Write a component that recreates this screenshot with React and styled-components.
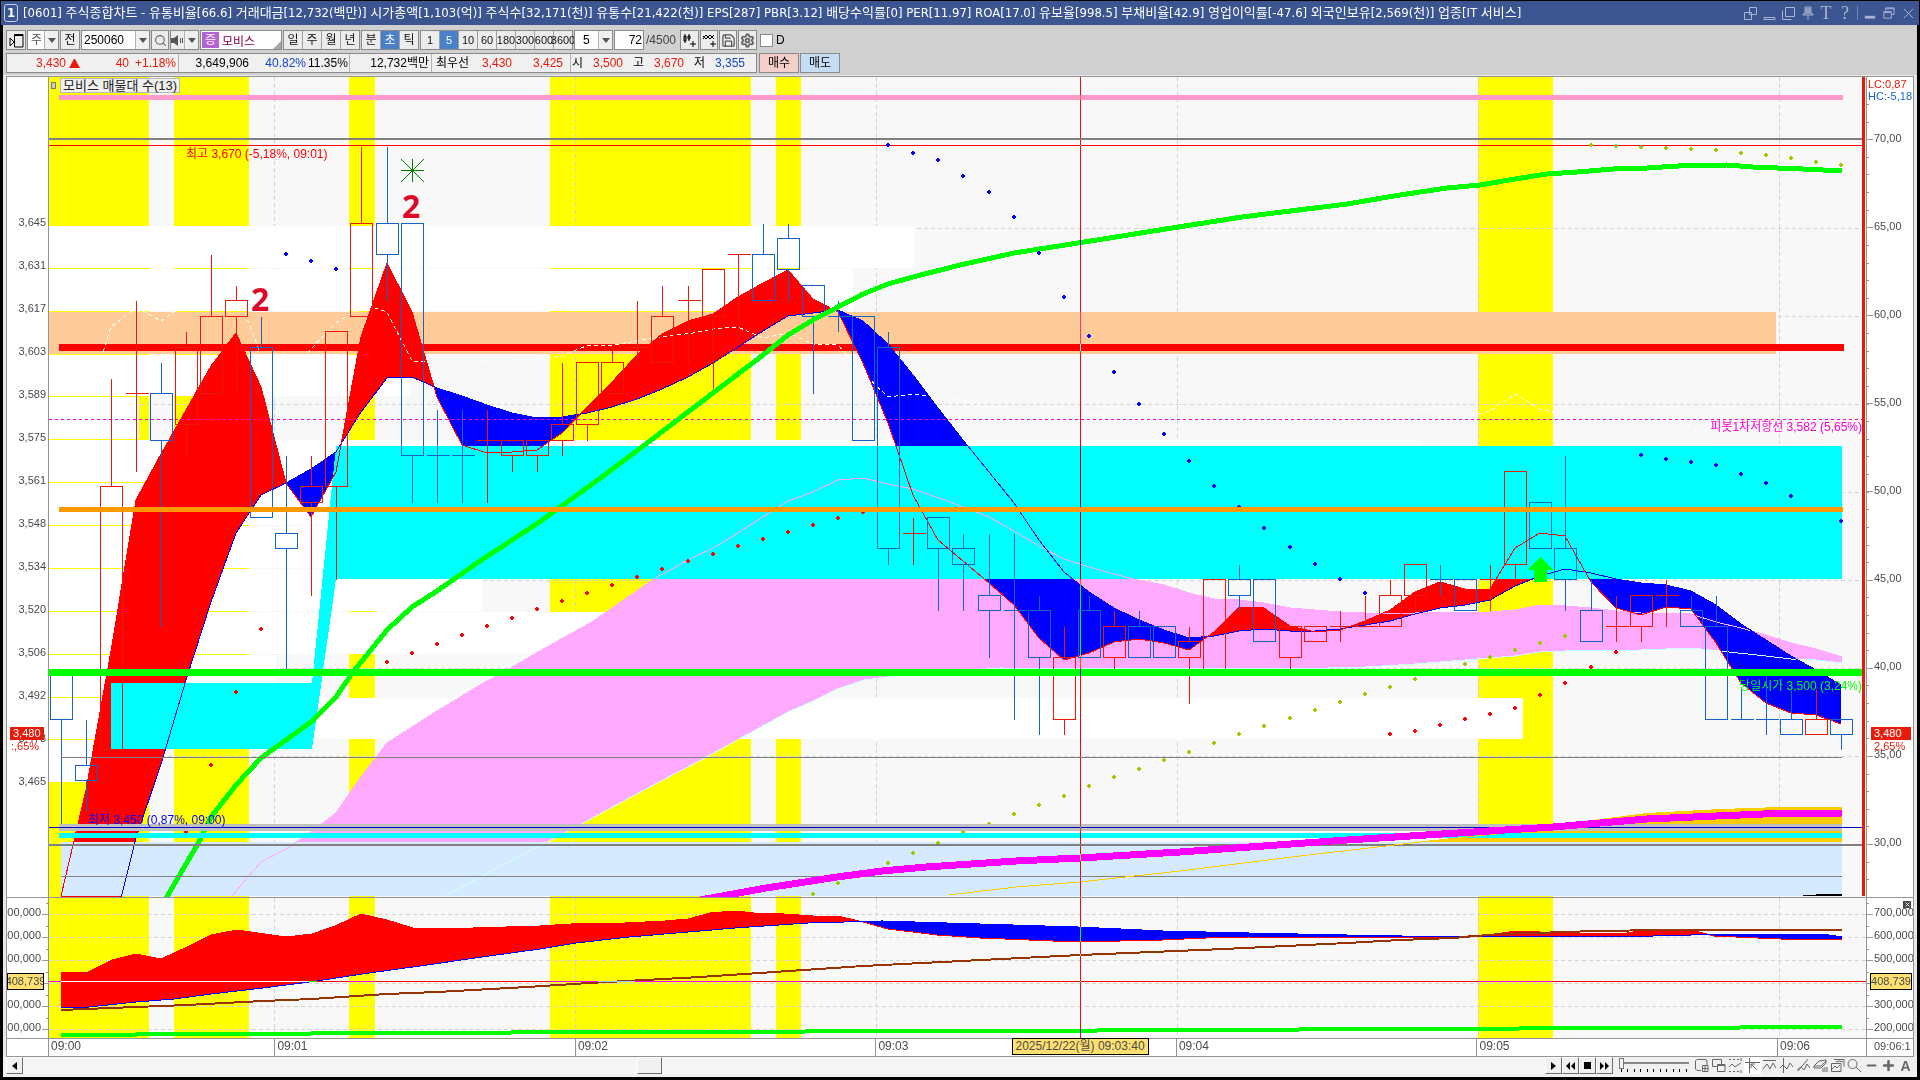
import { useState } from 'react';
import styled, { createGlobalStyle, css } from 'styled-components';
import { Search, Save, Settings, Minus, Plus, X } from 'lucide-react';

const GlobalStyle = createGlobalStyle`
  * {
    box-sizing: border-box;
  }
  body {
    margin: 0;
    background: #000;
    font: 12px/14px "Liberation Sans", "Noto Sans CJK KR", sans-serif;
    color: #000;
  }
  button,
  input,
  select {
    font: inherit;
    color: inherit;
    margin: 0;
    padding: 0;
    border: 0;
    border-radius: 0;
    background: none;
  }
`;

/* ---------- data ---------- */

const RED = '#e81a0a';
const BLUE = '#1464c8';

const LEFT = 49;
const RIGHT = 1866;
const TOP = 77;
const SPLIT = 897;
const BOTTOM = 1038;

const xAt = (i) => Math.floor(61 + i * 25.082);
const yAt = (price) => Math.round(223 + (3645 - price) * 3.097);

// [colour, body top, body bottom, high, low]
const candles = [
  ['b', 3500, 3485, 3500, 3450], ['b', 3470, 3465, 3485, 3455], ['r', 3560, 3475, 3595, 3475],
  ['r', 3590, 3590, 3620, 3565], ['b', 3590, 3575, 3600, 3515], ['r', 3605, 3580, 3610, 3570],
  ['r', 3615, 3590, 3635, 3590], ['r', 3620, 3615, 3625, 3590], ['b', 3605, 3550, 3615, 3550],
  ['b', 3545, 3540, 3570, 3500], ['r', 3560, 3555, 3570, 3525], ['r', 3610, 3560, 3610, 3530],
  ['r', 3645, 3615, 3670, 3615], ['b', 3645, 3635, 3670, 3620], ['b', 3645, 3570, 3645, 3555],
  ['b', 3570, 3570, 3585, 3555], ['b', 3570, 3570, 3585, 3555], ['r', 3575, 3575, 3585, 3555],
  ['r', 3575, 3570, 3575, 3565], ['r', 3575, 3570, 3575, 3565], ['r', 3580, 3575, 3600, 3570],
  ['r', 3600, 3580, 3600, 3575], ['r', 3600, 3590, 3605, 3590], ['r', 3605, 3605, 3620, 3600],
  ['r', 3615, 3600, 3625, 3600], ['r', 3620, 3620, 3625, 3600], ['r', 3630, 3615, 3630, 3590],
  ['r', 3635, 3635, 3635, 3610], ['b', 3635, 3620, 3645, 3620], ['b', 3640, 3630, 3645, 3620],
  ['b', 3625, 3615, 3625, 3590], ['b', 3615, 3615, 3620, 3610], ['b', 3615, 3575, 3615, 3575],
  ['b', 3605, 3540, 3610, 3535], ['r', 3545, 3545, 3550, 3535], ['b', 3550, 3540, 3550, 3520],
  ['b', 3540, 3535, 3545, 3520], ['b', 3525, 3520, 3545, 3505], ['b', 3520, 3520, 3545, 3485],
  ['b', 3520, 3505, 3525, 3480], ['r', 3505, 3485, 3515, 3480], ['b', 3520, 3505, 3525, 3505],
  ['r', 3515, 3505, 3520, 3500], ['b', 3515, 3505, 3520, 3505], ['b', 3515, 3505, 3515, 3505],
  ['r', 3510, 3505, 3515, 3490], ['r', 3530, 3500, 3530, 3500], ['b', 3530, 3525, 3535, 3520],
  ['b', 3530, 3510, 3530, 3510], ['r', 3515, 3505, 3515, 3500], ['r', 3515, 3510, 3515, 3510],
  ['r', 3515, 3515, 3520, 3510], ['r', 3515, 3515, 3525, 3515], ['r', 3525, 3515, 3530, 3515],
  ['r', 3535, 3525, 3535, 3520], ['b', 3530, 3530, 3535, 3525], ['b', 3530, 3520, 3530, 3520],
  ['r', 3530, 3530, 3535, 3520], ['r', 3565, 3535, 3565, 3530], ['b', 3555, 3540, 3555, 3540],
  ['b', 3540, 3530, 3570, 3520], ['b', 3520, 3510, 3530, 3510], ['r', 3515, 3515, 3525, 3510],
  ['r', 3525, 3515, 3525, 3510], ['r', 3525, 3525, 3530, 3515], ['b', 3520, 3515, 3525, 3515],
  ['b', 3515, 3485, 3525, 3485], ['b', 3485, 3485, 3495, 3485], ['b', 3485, 3485, 3500, 3480],
  ['b', 3485, 3480, 3495, 3480], ['r', 3485, 3480, 3495, 3480], ['b', 3485, 3480, 3485, 3475],
];

const fastMa = [
  896, 790, 651, 500, 454, 410, 366, 333, 387, 483, 517, 472, 337, 263, 312, 397, 445, 453,
  452, 450, 433, 407, 382, 355, 334, 321, 314, 297, 283, 270, 299, 312, 363, 423, 495, 540,
  561, 583, 605, 638, 660, 653, 642, 639, 643, 650, 632, 607, 608, 626, 632, 630, 621, 610,
  592, 582, 589, 589, 548, 533, 536, 582, 608, 615, 607, 609, 643, 683, 703, 713, 715, 724,
];

const slowMa = [
  1140, 1040, 938, 838, 764, 680, 602, 533, 495, 483, 469, 452, 412, 378, 377, 388, 396, 405,
  413, 418, 417, 413, 407, 399, 389, 377, 363, 347, 331, 316, 313, 310, 321, 344, 375, 408,
  440, 472, 503, 540, 572, 592, 608, 620, 630, 638, 636, 631, 629, 631, 631, 629, 625, 621,
  614, 608, 605, 600, 586, 576, 569, 573, 579, 583, 585, 591, 605, 624, 640, 656, 670, 685,
];

const cloudTop = [
  [232, 896], [247, 878], [261, 862], [286, 849], [311, 832], [336, 813], [361, 777], [387, 743],
  [412, 727], [437, 711], [462, 696], [480, 685], [509, 669], [547, 647], [592, 622], [654, 579],
  [688, 560], [717, 546], [755, 522], [788, 501], [813, 492], [838, 480], [863, 478], [888, 484],
  [913, 489], [942, 499], [963, 507], [989, 517], [1014, 531], [1039, 546], [1064, 559],
  [1089, 567], [1114, 574], [1133, 579], [1164, 585], [1189, 593], [1214, 599], [1239, 600],
  [1264, 603], [1290, 608], [1340, 612], [1390, 614], [1440, 612], [1490, 612], [1515, 610],
  [1540, 605], [1565, 606], [1591, 608], [1616, 611], [1641, 613], [1691, 614], [1716, 622],
  [1741, 628], [1766, 635], [1791, 643], [1816, 649], [1842, 657],
];

const cloudBottom = [
  [445, 896], [480, 877], [547, 842], [583, 823], [659, 782], [703, 759], [739, 739], [788, 712],
  [813, 701], [837, 689], [864, 680], [895, 676], [960, 671], [1000, 668], [1200, 669],
  [1328, 668], [1365, 667], [1415, 664], [1440, 662], [1490, 658], [1515, 656], [1540, 652],
  [1590, 650], [1641, 650], [1691, 648], [1720, 651], [1766, 656], [1791, 659], [1816, 660],
  [1842, 663],
];

const greenMa = [
  [165, 900], [200, 840], [211, 817], [236, 785], [261, 758], [286, 740], [311, 722], [336, 697],
  [353, 672], [387, 630], [412, 607], [437, 591], [480, 561], [538, 523], [570, 500], [595, 482],
  [642, 447], [680, 418], [713, 393], [763, 355], [788, 335], [813, 320], [838, 307], [863, 294],
  [888, 284], [913, 277], [960, 265], [1014, 253], [1078, 243], [1172, 228], [1242, 217],
  [1347, 204], [1400, 195], [1447, 188], [1480, 185], [1515, 179], [1547, 174], [1577, 172],
  [1613, 169], [1647, 168], [1678, 166], [1727, 165], [1753, 167], [1803, 169], [1842, 171],
];

const magentaMa = [
  [700, 900], [766, 888], [792, 884], [837, 877], [882, 871], [926, 867], [971, 864], [1016, 861],
  [1080, 858], [1180, 852], [1347, 840], [1553, 827], [1647, 819], [1763, 814], [1842, 813],
];

const goldTop = [
  [1553, 828], [1600, 819], [1647, 813], [1720, 809], [1780, 807], [1842, 807],
];

const goldLine = [
  [949, 895], [1016, 887], [1080, 882], [1180, 871], [1300, 856], [1420, 842], [1553, 828],
];

const whiteDashes = [
  [[103, 352], [111, 327], [130, 312], [143, 311], [161, 321], [177, 310]],
  [[245, 313], [260, 352]],
  [
    [307, 353], [336, 323], [353, 312], [375, 308], [387, 312], [412, 361], [480, 361], [540, 359],
    [562, 356], [586, 346], [613, 345], [660, 337], [693, 333], [713, 329], [738, 327], [763, 338],
    [788, 333], [813, 344], [838, 345], [863, 373], [888, 397], [913, 394], [963, 400], [989, 410],
    [1017, 411], [1031, 417], [1117, 415], [1139, 421], [1189, 418], [1214, 407], [1239, 412],
    [1256, 418], [1371, 418], [1390, 411], [1415, 408], [1440, 410], [1465, 417], [1490, 411],
    [1515, 394], [1540, 409], [1565, 415], [1591, 428], [1616, 425], [1640, 420], [1673, 420],
    [1691, 427], [1716, 444], [1820, 445],
  ],
];

// parabolic dots: [colour, first candle index, y values]
const dots = [
  ['#00f', 9, [254, 261, 269]],
  ['#00f', 33, [145, 153, 160, 176, 192, 217, 253, 297, 336, 372, 404, 434, 461, 486, 507, 528, 547, 564, 579, 593]],
  ['#00f', 63, [455, 459, 462, 465, 474, 483, 496]],
  ['#00f', 71, [521]],
  ['#f00', 5, [832, 765, 692, 629]],
  ['#f00', 13, [662, 653, 644, 635, 626, 618, 609, 601, 593, 585, 577, 569, 561, 554, 546, 539, 532, 525, 518, 512]],
  ['#f00', 53, [734, 731, 725, 719, 714, 708, 695, 683, 667, 652]],
  ['#9c0', 30, [894, 883, 873, 863, 853, 843, 832, 824, 814, 805, 796, 786, 777, 769, 760, 752, 743, 734, 726, 718, 710, 702, 694, 687, 679, 671, 664, 657, 650, 643, 636]],
  ['#9c0', 61, [145, 146, 147, 148, 149, 150, 153, 155, 158, 162, 165]],
];

const signalBands = [[49, 149], [174, 249], [349, 375], [550, 751], [776, 801], [1478, 1553]];

// volume by price: [top, bottom, right edge, colour]
const volumeBands = [
  [226, 268, 914], [269, 311, 853], [312, 354, 1776, '#fc9'], [355, 396, 410], [397, 439, 139],
  [440, 482, 1423], [483, 525, 900], [526, 568, 900], [569, 611, 483], [612, 654, 900],
  [655, 697, 276], [698, 739, 1523], [740, 782, 95],
];

const minuteLines = [274, 575, 876, 1177, 1478, 1779];

const subFast = [
  [61, 972], [86, 973], [112, 960], [136, 954], [161, 959], [187, 947], [211, 935], [237, 930],
  [286, 937], [312, 934], [335, 926], [361, 914], [387, 920], [413, 928], [473, 928], [540, 926],
  [571, 924], [625, 923], [665, 921], [688, 919], [710, 913], [735, 911], [754, 913], [784, 914],
  [813, 916], [838, 916], [863, 922], [888, 929], [937, 935], [980, 938], [1078, 942], [1163, 940],
  [1206, 938], [1249, 937], [1347, 937], [1447, 937], [1490, 935], [1515, 931], [1540, 932],
  [1620, 934], [1640, 931], [1667, 930], [1692, 930], [1714, 936], [1780, 939], [1842, 940],
];

const subSlow = [
  [61, 1008], [89, 1007], [136, 1002], [174, 999], [211, 994], [263, 988], [317, 981], [362, 974],
  [420, 966], [482, 957], [540, 949], [576, 943], [629, 937], [700, 931], [735, 928], [808, 923],
  [882, 921], [980, 924], [1078, 927], [1163, 931], [1249, 933], [1347, 935], [1457, 937],
  [1653, 936], [1730, 934], [1823, 934], [1842, 937],
];

const subBrown = [
  [61, 1010], [136, 1007], [187, 1005], [263, 1001], [312, 999], [387, 994], [437, 992],
  [527, 987], [589, 983], [700, 977], [863, 966], [1080, 955], [1224, 949], [1347, 943],
  [1400, 940], [1453, 938], [1500, 934], [1567, 932], [1593, 931], [1667, 930], [1842, 930],
];

const subGreen = [
  [61, 1035], [212, 1034], [413, 1033], [612, 1032], [1000, 1031], [1400, 1029], [1642, 1028],
  [1842, 1027],
];

const priceLabels = [
  '3,645', '3,631', '3,617', '3,603', '3,589', '3,575', '3,561',
  '3,548', '3,534', '3,520', '3,506', '3,492', '3,478', '3,465',
];
const percentLabels = ['70,00', '65,00', '60,00', '55,00', '50,00', '45,00', '40,00', '35,00', '30,00'];
const volumeLabels = ['700,000', '600,000', '500,000', null, '300,000', '200,000'];

/* ---------- geometry helpers ---------- */

const toPoints = (list) => list.map((p) => p.join(',')).join(' ');

const valueAt = (list, x) => {
  const k = list.findIndex((p) => p[0] >= x);
  if (k <= 0) return list[Math.max(k, 0)][1];
  const [x0, y0] = list[k - 1];
  const [x1, y1] = list[k];
  return y0 + ((y1 - y0) * (x - x0)) / (x1 - x0);
};

// splits the area between two lines into the parts where a is above or below b
const splitArea = (a, b) => {
  const xs = [...new Set([...a, ...b].map((p) => p[0]))].sort((m, n) => m - n);
  const up = [];
  const down = [];
  for (let k = 1; k < xs.length; k += 1) {
    const [x0, x1] = [xs[k - 1], xs[k]];
    const [a0, a1, b0, b1] = [valueAt(a, x0), valueAt(a, x1), valueAt(b, x0), valueAt(b, x1)];
    const d0 = b0 - a0;
    const d1 = b1 - a1;
    if (d0 * d1 >= 0) {
      (d0 + d1 > 0 ? up : down).push(`M${x0} ${a0}L${x1} ${a1}L${x1} ${b1}L${x0} ${b0}Z`);
    } else {
      const t = d0 / (d0 - d1);
      const xc = x0 + (x1 - x0) * t;
      const yc = a0 + (a1 - a0) * t;
      (d0 > 0 ? up : down).push(`M${x0} ${a0}L${xc} ${yc}L${x0} ${b0}Z`);
      (d1 > 0 ? up : down).push(`M${xc} ${yc}L${x1} ${a1}L${x1} ${b1}Z`);
    }
  }
  return { up: up.join(''), down: down.join('') };
};

const fastPoints = fastMa.map((y, i) => [xAt(i), y]);
const slowPoints = slowMa.map((y, i) => [xAt(i), y]);
const maArea = splitArea(fastPoints, slowPoints);
const subArea = splitArea(subFast, subSlow);

/* ---------- window ---------- */

const Window = styled.div`
  display: flex;
  flex-direction: column;
  height: 100vh;
  padding: 1px 1px 3px;
`;

const TitleBar = styled.header`
  display: flex;
  align-items: center;
  justify-content: space-between;
  height: 24px;
  padding: 0 4px 0 3px;
  background: #3a5590;
  color: #fff;
`;

const Title = styled.h1`
  display: flex;
  align-items: center;
  gap: 5px;
  margin: 0;
  font: 13px/18px "DejaVu Sans Condensed", "Noto Sans CJK KR", sans-serif;
  white-space: pre;
`;

const TitleBadge = styled.span`
  width: 14px;
  height: 18px;
  border: 1px solid #c8d2ea;
  border-radius: 3px;
  font-weight: bold;
  line-height: 16px;
  text-align: center;
`;

const TitleButtons = styled.div`
  display: flex;
  align-items: center;
  gap: 5px;
  color: #a9b5d3;
`;

const TitleButton = styled.button`
  width: 14px;
  height: 18px;
  font-family: "Liberation Serif", serif;
  font-size: 18px;
  line-height: 18px;
  svg {
    display: block;
    margin: 2px auto;
  }
`;

const TitleDivider = styled.span`
  width: 1px;
  height: 14px;
  background: #7385b0;
`;

const Body = styled.main`
  display: flex;
  flex: 1;
  flex-direction: column;
  min-height: 0;
  margin: 0 2px;
  background: #e8e8e8;
`;

/* ---------- toolbar ---------- */

const Toolbars = styled.div`
  display: flex;
  flex: none;
  flex-direction: column;
  gap: 3px;
  height: 50px;
  padding: 5px 3px 2px;
  background: #d0d0d0;
`;

const Row = styled.div`
  display: flex;
  height: 20px;
  gap: 1px;
`;

const box = css`
  display: flex;
  align-items: center;
  height: 20px;
  border: 1px solid #8a8a8a;
  background: #f0f0f0;
`;

const ToolButton = styled.button`
  ${box};
  justify-content: center;
  width: ${(p) => p.$w || 20}px;
  background: ${(p) => p.$bg || '#ececec'};
`;

const Field = styled.div`
  ${box};
  width: ${(p) => p.$w}px;
  background: #fdfdfd;
`;

const fieldText = css`
  flex: 1;
  min-width: 0;
  height: 18px;
  padding: 0 ${(p) => p.$pad || 2}px;
  appearance: none;
  outline: none;
  color: ${(p) => p.$color || '#000'};
  text-align: ${(p) => p.$align || 'left'};
`;

const TextInput = styled.input`
  ${fieldText};
`;

const Select = styled.select`
  ${fieldText};
`;

const ArrowCell = styled.button`
  display: flex;
  align-items: center;
  justify-content: center;
  width: 14px;
  height: 18px;
  border-left: 1px solid #b4b4b4;
  background: #f0f0f0;
`;

const SoundButton = styled.button`
  display: flex;
  flex: 1;
  align-items: center;
  justify-content: center;
  height: 18px;
  background: #ececec;
`;

const MarketTag = styled.span`
  width: 17px;
  height: 16px;
  margin-left: 1px;
  background: #b463d2;
  color: #fff;
  line-height: 16px;
  text-align: center;
`;

const Corner = styled.span`
  align-self: flex-end;
  border: 4px solid;
  border-color: transparent #a8a8a8 #a8a8a8 transparent;
`;

const Segments = styled.div`
  ${box};
  width: ${(p) => p.$w}px;
  font-size: ${(p) => p.$font || 12}px;
`;

const Segment = styled.button`
  display: flex;
  flex: 1;
  align-items: center;
  justify-content: center;
  min-width: 0;
  height: 18px;
  border-left: 1px solid #a0a0a0;
  background: ${(p) => (p.$on ? '#4a80c8' : '#ececec')};
  color: ${(p) => (p.$on ? '#fff' : '#111')};
  white-space: nowrap;
  &:first-child {
    border-left: 0;
  }
`;

const Total = styled.span`
  width: 34px;
  padding-left: 1px;
  color: #444;
  line-height: 20px;
`;

const CheckLabel = styled.label`
  display: flex;
  align-items: center;
  gap: 3px;
  padding-left: 2px;
  input {
    appearance: none;
    width: 13px;
    height: 13px;
    border: 1px solid #8a8a8a;
    background: #fff;
  }
`;

const Quote = styled.div`
  ${box};
  width: 751px;
  margin-right: 1px;
  background: #f0f0f0;
`;

const QuoteCell = styled.span`
  width: ${(p) => p.$w}px;
  height: 18px;
  padding-right: ${(p) => p.$pad || 2}px;
  border-right: ${(p) => (p.$end ? '1px solid #b4b4b4' : '0')};
  color: ${(p) => p.$color || '#000'};
  line-height: 18px;
  text-align: right;
  white-space: nowrap;
`;

const UpMark = styled.svg`
  margin-left: 3px;
  vertical-align: -1px;
`;

/* ---------- chart ---------- */

const ChartFrame = styled.section`
  display: grid;
  flex: 1;
  grid-template-columns: 42px minmax(0, 1fr) 47px;
  grid-template-rows: minmax(0, 820fr) minmax(0, 142fr) 17px;
  min-height: 0;
  margin: 1px 3px 0;
  border: 1px solid #949494;
  background: #fff;
`;

const Plot = styled.div`
  position: relative;
  min-height: 0;
  overflow: hidden;
  border-bottom: ${(p) => (p.$last ? '1px solid #949494' : '0')};
  border-top: ${(p) => (p.$last ? '1px solid #949494' : '0')};
  background: #f8f8f8;
`;

const Canvas = styled.svg`
  display: block;
  width: 100%;
  height: 100%;
`;

const Crosshair = styled.line`
  stroke: #0ff;
  mix-blend-mode: difference;
`;

const PlotCaption = styled.div`
  position: absolute;
  top: 1px;
  left: 2px;
  display: flex;
  align-items: center;
  gap: 4px;
  color: #222;
  font-size: 13px;
  i {
    width: 5px;
    height: 7px;
    border: 1px solid #777;
    background: #ccc;
  }
  span {
    height: 15px;
    padding: 0 2px;
    border: 1px solid #b8b8b8;
    background: #f0f0f0;
    line-height: 13px;
  }
`;

const Axis = styled.div`
  position: relative;
  display: flex;
  justify-content: ${(p) => (p.$left ? 'flex-end' : 'flex-start')};
  min-height: 0;
  overflow: hidden;
  border-${(p) => (p.$left ? 'right' : 'left')}: 1px solid #949494;
  border-bottom: ${(p) => (p.$last ? '1px solid #949494' : '0')};
  border-top: ${(p) => (p.$last ? '1px solid #949494' : '0')};
  color: #4a4a4a;
  font-size: 11px;
`;

const AxisLabels = styled.div`
  display: flex;
  flex-direction: column;
  align-items: ${(p) => (p.$left ? 'flex-end' : 'flex-start')};
  padding-top: ${(p) => p.$top}px;
  padding-right: ${(p) => p.$right || 0}px;
`;

const AxisLabel = styled.span`
  flex: none;
  height: ${(p) => p.$h}px;
  line-height: ${(p) => p.$h}px;
`;

const Ticks = styled.svg`
  flex: none;
  width: 7px;
  height: 100%;
`;

const PriceTag = styled.div`
  position: absolute;
  top: 650px;
  left: ${(p) => (p.$left ? 3 : 4)}px;
  width: ${(p) => (p.$left ? 34 : 40)}px;
  padding-left: 3px;
  background: ${RED};
  color: #fff;
  line-height: 13px;
`;

const PriceChange = styled.div`
  position: absolute;
  top: 663px;
  left: ${(p) => (p.$left ? 4 : 7)}px;
  color: ${RED};
  line-height: 12px;
`;

const HighLow = styled.div`
  position: absolute;
  top: 1px;
  left: 1px;
  color: ${(p) => p.$color};
  line-height: 12px;
  white-space: nowrap;
`;

const CursorTag = styled.div`
  position: relative;
  display: flex;
  flex: none;
  justify-content: center;
  width: ${(p) => p.$w}px;
  height: 17px;
  margin: 3px ${(p) => (p.$left ? -3 : 0)}px 3px ${(p) => (p.$left ? 0 : -4)}px;
  overflow: hidden;
  border: 1px solid #000;
  background: #ffe070;
  line-height: 15px;
`;

const CloseMark = styled.button`
  position: absolute;
  top: 3px;
  right: 2px;
  width: 8px;
  height: 7px;
  background: #444;
  color: #fff;
  svg {
    display: block;
    margin: 0 auto;
  }
`;

const TimeAxis = styled.div`
  position: relative;
  display: flex;
  margin-left: -1px;
  color: #4a4a4a;
`;

const TimeCell = styled.span`
  flex: ${(p) => p.$grow};
  min-width: 0;
  padding-left: 2px;
  border-left: 1px solid #949494;
`;

const TimeTag = styled.div`
  position: absolute;
  top: -1px;
  left: 53%;
  width: 137px;
  height: 17px;
  border: 1px solid #000;
  background: #ffe070;
  line-height: 15px;
  text-align: center;
`;

const TimeEnd = styled.div`
  padding-left: 7px;
  border-left: 1px solid #949494;
  color: #4a4a4a;
  font-size: 11px;
`;

/* ---------- bottom bar ---------- */

const BottomBar = styled.footer`
  display: flex;
  flex: none;
  height: 20px;
  padding: 0 3px 3px;
  background: #f0f0f0;
`;

const RaisedButton = styled.button`
  display: flex;
  align-items: center;
  justify-content: center;
  width: 17px;
  height: 17px;
  border: 1px solid;
  border-color: #fff #6e6e6e #6e6e6e #fff;
  background: #f0f0f0;
`;

const ScrollTrack = styled.div`
  display: grid;
  flex: 1;
  grid-template-columns: 614fr 25px 884fr;
  height: 17px;
  background: #f6f6f6;
`;

const ScrollThumb = styled.div`
  grid-column: 2;
  border: 1px solid;
  border-color: #fff #6e6e6e #6e6e6e #fff;
  background: #f0f0f0;
`;

const SpeedBox = styled.div`
  display: flex;
  flex-direction: column;
  width: 70px;
  margin: 0 4px 0 6px;
`;

const Speed = styled.input`
  appearance: none;
  width: 70px;
  height: 12px;
  background: linear-gradient(#888, #888) 0 5px / 100% 2px no-repeat;
  &::-webkit-slider-thumb {
    appearance: none;
    width: 5px;
    height: 11px;
    border: 1px solid #777;
    background: #f4f4f4;
  }
`;

const BarIcon = styled.button`
  display: flex;
  align-items: center;
  justify-content: center;
  width: 17px;
  height: 17px;
  background: ${(p) => (p.$on ? '#fff' : 'none')};
  color: #666;
  font-size: 14px;
`;

/* ---------- small drawings ---------- */

const Down = () => (
  <svg width="8" height="5" viewBox="0 0 8 5">
    <path d="M0 0H8L4 5Z" fill="#555" />
  </svg>
);

const Glyph = ({ d, size = 15, fill = 'none', width = 1 }) => (
  <svg width={size} height={size} viewBox="0 0 15 15" fill={fill} stroke="currentColor" strokeWidth={width}>
    <path d={d} />
  </svg>
);

const titleIcons = [
  ['창 분리', 'M1.5 6.5H8.5V13.5H1.5Z M6.5 1.5H13.5V8.5H6.5Z'],
  ['접기', 'M2 11.5H13V13.5H2Z'],
  ['복사', 'M1.5 4.5V13.5H10.5 M4.5 1.5H13.5V10.5H4.5Z'],
  ['고정', 'M5 1H11V8H13V9H3V8H5Z M8 9V14 M7 2V8 M9 2V8 M6 2V8 M10 2V8 M8 2V8'],
];

const barIcons = [
  ['차트 추가', 'M13 7V3L12 1.5H3L1.5 3V11L3 12.5H7 M8.5 7.5H14V13.5H8.5Z M11 7.5V13.5 M8.5 10.5H14'],
  ['차트 겹침', 'M1.5 1.5H10.5V7 M1.5 1.5V8.5H6 M6.5 6.5H14V13.5H6.5Z M6.5 7.5H14'],
  ['구간', 'M1 1.5H3M5 1.5H7M9 1.5H11M13 0V3 M1 13.5H3M5 13.5H7M9 13.5H11M13 12V15 M1 9L4 6L7 9L13 5'],
  ['십자선', 'M0 4.5H15 M4.5 0V15 M6 6L12 12 M6 10V6H10'],
  ['수평선', 'M1 2.5H14 M1 11L5 6L8 11L11 5L14 10'],
  ['수직선', 'M4.5 0V15 M1 10L4 7L8 11L11 5L14 9'],
  ['추세선', 'M2 13L12 1 M1 12L5 9L8 12L11 6L14 10'],
  ['전체 지우기', 'M1 8L6 3L13 2V5L8 10H1Z M1 8H8L13 3 M10 14V10M12 14V9M14 14V9'],
  ['보조 창', 'M4 1.5H14V8.5 M1.5 5.5H11V13.5H1.5Z M2 11L5 8L7 10L10 7 M6 4L9 3L13 4'],
  ['돋보기', 'M5.5 1.5A4.5 4.5 0 1 0 5.6 1.5 M9 9L14 14'],
];

/* ---------- plots ---------- */

const Candle = ({ data: [kind, top, bottom, high, low], index }) => {
  const x = xAt(index) + 0.5;
  const color = kind === 'r' ? RED : BLUE;
  const [yt, yb, yh, yl] = [top, bottom, high, low].map((v) => yAt(v) + 0.5);
  return (
    <g stroke={color} fill="none">
      {yh < yt && <path d={`M${x} ${yh}V${yt}`} />}
      {yl > yb && <path d={`M${x} ${yb}V${yl}`} />}
      {top === bottom ? (
        <path d={`M${x - 11} ${yt}H${x + 12}`} />
      ) : (
        <rect x={x - 11} y={yt} width="22" height={yb - yt} />
      )}
    </g>
  );
};

const Background = ({ y, height }) => (
  <>
    {signalBands.map(([x0, x1]) => (
      <rect key={x0} x={x0} y={y} width={x1 - x0} height={height} fill="#ff0" />
    ))}
    {minuteLines.map((x) => (
      <path key={x} d={`M${x + 0.5} ${y}V${y + height}`} stroke="#d4d4d4" strokeDasharray="4 3" />
    ))}
  </>
);

const HLine = ({ y, from = 61, to = 1842, color, width = 1, dash }) => (
  <path d={`M${from} ${y}H${to}`} stroke={color} strokeWidth={width} strokeDasharray={dash} />
);

const PricePlot = () => (
  <Canvas
    viewBox={`${LEFT} ${TOP} ${RIGHT - LEFT} ${SPLIT - TOP}`}
    preserveAspectRatio="none"
    shapeRendering="crispEdges"
    fill="none"
  >
    <Background y={TOP} height={SPLIT - TOP} />
    {[228, 316, 404, 492, 580, 668, 756].map((y) => (
      <HLine key={y} y={y + 0.5} from={LEFT} to={1862} color="#d4d4d4" dash="4 3" />
    ))}
    {volumeBands.map(([y0, y1, x1, color = '#fff']) => (
      <rect key={y0} x={LEFT} y={y0} width={x1 - LEFT} height={y1 - y0} fill={color} />
    ))}

    <polygon points={toPoints([...cloudTop, ...[...cloudBottom].reverse()])} fill="#faf" />
    <HLine y={347.5} from={59} to={1844} color="#f00" width={7} />
    <path d={maArea.up} fill="#f00" />
    <path d={maArea.down} fill="#00f" />
    <polygon
      points="111,683 312,683 336,446 1842,446 1842,579 336,579 312,749 111,749"
      fill="#0ff"
    />
    <polygon points={toPoints([...goldTop, [1842, 842], [1420, 842]])} fill="#fc0" />
    <rect x="61" y="842" width="1781" height="54" fill="#d6eaff" />

    {whiteDashes.map((line) => (
      <polyline key={line[0][0]} points={toPoints(line)} stroke="#fff" strokeDasharray="4 3" />
    ))}
    <polyline points={toPoints(cloudTop)} stroke="#faf" />
    <polyline points={toPoints(cloudBottom)} stroke="#cff" />
    <polyline points={toPoints(slowPoints)} stroke="#00e" />
    <polyline points={toPoints(fastPoints)} stroke="#f00" />

    <HLine y={97.5} from={59} to={1843} color="#f9c" width={5} />
    <HLine y={139} from={LEFT} to={1862} color="#808080" width={2} />
    <HLine y={145.5} from={LEFT} to={1862} color="#f00" />
    <HLine y={419.5} from={LEFT} to={1862} color="#f0c" dash="3 3" />
    {candles.map((c, i) => (
      <Candle key={xAt(i)} data={c} index={i} />
    ))}
    <polyline points={toPoints(greenMa)} stroke="#0f0" strokeWidth="5" />

    <HLine y={757.5} color="#808080" />
    {dots.map(([color, start, ys]) =>
      ys.map((y, k) => (
        <path
          key={`${color}${start + k}`}
          d={`M${xAt(start + k) - 2} ${y}h4M${xAt(start + k)} ${y - 2}v4`}
          stroke={color}
          strokeWidth="2"
        />
      )),
    )}
    <HLine y={509.5} from={59} to={1843} color="#f90" width={5} />
    <HLine y={672.5} from={LEFT} to={1862} color="#0f0" width={7} />
    <HLine y={827.5} from={59} to={1842} color="#c0c0c0" width={7} />
    <HLine y={827.5} from={LEFT} to={1862} color="#00c" />
    <HLine y={835.5} from={59} to={1842} color="#0ff" width={5} />
    <HLine y={845} from={LEFT} to={1862} color="#808080" width={2} />
    <HLine y={876.5} color="#808080" />
    <polyline points={toPoints(goldLine)} stroke="#fc0" />
    <polyline points={toPoints(magentaMa)} stroke="#f0f" strokeWidth="7" />
    <path d="M1803 895.5H1842M1816 894.5H1842" stroke="#000" />

    <path d="M401 170.5H424M412.5 159V182M401 159L424 182M424 159L401 182" stroke="#008000" />
    <path d="M1540 557L1553 570H1547V582H1534V570H1528Z" fill="#0f0" />

    <g fontSize="12" fontFamily="'Liberation Sans', 'Noto Sans CJK KR', sans-serif">
      <text x="186" y="158" fill="#f00">최고 3,670 (-5,18%, 09:01)</text>
      <text x="88" y="824" fill="#00f">최저 3,450 (0,87%, 09:00)</text>
      <text x="1862" y="431" fill="#f0c" textAnchor="end">피봇1차저항선 3,582 (5,65%)</text>
      <text x="1862" y="690" fill="#0f0" textAnchor="end">당일시가 3,500 (3,24%)</text>
    </g>
    <g fontSize="32" fontWeight="bold" fontFamily="'Noto Sans', sans-serif" fill="#dc0a28">
      <text x="251" y="311">2</text>
      <text x="402" y="218">2</text>
    </g>

    <path d={`M1863.5 ${TOP}V896`} stroke={RED} strokeWidth="3" />
    <Crosshair x1="1080.5" x2="1080.5" y1={TOP} y2={SPLIT} />
  </Canvas>
);

const VolumePlot = () => (
  <Canvas
    viewBox={`${LEFT} 898 ${RIGHT - LEFT} ${BOTTOM - 898}`}
    preserveAspectRatio="none"
    shapeRendering="crispEdges"
    fill="none"
  >
    <Background y={898} height={BOTTOM - 898} />
    {[914, 937, 960, 983, 1006, 1029].map((y) => (
      <HLine key={y} y={y + 0.5} from={LEFT} to={RIGHT} color="#d4d4d4" dash="4 3" />
    ))}
    <path d={subArea.up} fill="#f00" />
    <path d={subArea.down} fill="#00f" />
    <polyline points={toPoints(subFast)} stroke="#f00" />
    <polyline points={toPoints(subSlow)} stroke="#00f" />
    <polyline points={toPoints(subBrown)} stroke="#930" strokeWidth="2" />
    <polyline points={toPoints(subGreen)} stroke="#0f0" strokeWidth="4" />
    <Crosshair x1="1080.5" x2="1080.5" y1="898" y2={BOTTOM} />
    <Crosshair x1={LEFT} x2={RIGHT} y1="981.5" y2="981.5" />
  </Canvas>
);

const tickPath = (first, step, count, length, flip) =>
  Array.from({ length: count }, (_, k) => {
    const y = Math.round(first + k * step) + 0.5;
    return flip ? `M7 ${y}h-${length}` : `M0 ${y}h${length}`;
  }).join('');

const VolumeAxis = ({ left }) => {
  const ticks = (
    <Ticks shapeRendering="crispEdges" stroke="#999">
      <path d={tickPath(16, 23, 6, 6, left) + tickPath(5, 23, 6, 2, left)} />
    </Ticks>
  );
  return (
    <Axis $left={left} $last>
      {!left && ticks}
      <AxisLabels $left={left} $top={3}>
        {volumeLabels.map((label, i) =>
          label ? (
            <AxisLabel key={label} $h={23}>{label}</AxisLabel>
          ) : (
            <CursorTag key={i} $left={left} $w={left ? 37 : 42}>408,739</CursorTag>
          ),
        )}
      </AxisLabels>
      {left ? ticks : <CloseMark aria-label="닫기"><X size={7} strokeWidth={3} /></CloseMark>}
    </Axis>
  );
};

/* ---------- page ---------- */

const dayUnits = ['일', '주', '월', '년'];
const minuteUnits = ['분', '초', '틱'];
const spans = ['1', '5', '10', '60', '180', '300', '600', '3600'];

const App = () => {
  const [unit, setUnit] = useState('초');
  const [span, setSpan] = useState('5');

  return (
    <>
      <GlobalStyle />
      <Window>
        <TitleBar>
          <Title>
            <TitleBadge>1</TitleBadge>
            [0601] 주식종합차트 - 유통비율[66.6] 거래대금[12,732(백만)] 시가총액[1,103(억)] 주식수[32,171(천)] 유통수[21,422(천)] EPS[287] PBR[3.12] 배당수익률[0] PER[11.97] ROA[17.0] 유보율[998.5] 부채비율[42.9] 영업이익률[-47.6] 외국인보유[2,569(천)] 업종[IT 서비스]
          </Title>
          <TitleButtons>
            {titleIcons.map(([name, d]) => (
              <TitleButton key={name} aria-label={name}><Glyph d={d} size={15} /></TitleButton>
            ))}
            <TitleButton>T</TitleButton>
            <TitleButton>?</TitleButton>
            <TitleDivider />
            <TitleButton aria-label="최소화"><Glyph d="M2 12H13" size={14} width={3} /></TitleButton>
            <TitleButton aria-label="복원">
              <Glyph d="M4 5V2H13V9H10 M2 6H10V13H2Z M2 7H10 M4 3H13" size={14} />
            </TitleButton>
            <TitleButton aria-label="닫기"><Glyph d="M3 3L13 13M13 3L3 13" size={14} /></TitleButton>
          </TitleButtons>
        </TitleBar>

        <Body>
          <Toolbars>
            <Row>
              <ToolButton aria-label="목록">
                <Glyph d="M5.5 1.5H14V14H5.5Z M1 5V13L5 9Z M5 2.5H14" />
              </ToolButton>
              <Field $w={32}>
                <Select aria-label="종목 구분" $color="#555" $pad={3} defaultValue="주">
                  <option>주</option>
                </Select>
                <ArrowCell aria-label="열기"><Down /></ArrowCell>
              </Field>
              <ToolButton>전</ToolButton>
              <Field $w={69}>
                <TextInput aria-label="종목코드" defaultValue="250060" />
                <ArrowCell aria-label="열기"><Down /></ArrowCell>
              </Field>
              <ToolButton $w={18} aria-label="검색"><Search size={13} color="#666" /></ToolButton>
              <Field $w={29}>
                <SoundButton aria-label="소리">
                  <svg width="13" height="13" viewBox="0 0 13 13" fill="#555">
                    <path d="M0 4H3L7 1V12L3 9H0Z M9 4H10V9H9Z M11 4H12V9H11Z" />
                  </svg>
                </SoundButton>
                <ArrowCell aria-label="소리 설정"><Down /></ArrowCell>
              </Field>
              <Field $w={82}>
                <MarketTag>증</MarketTag>
                <TextInput aria-label="종목명" $color="#800040" $pad={3} defaultValue="모비스" />
                <Corner />
              </Field>
              <Segments $w={77}>
                {dayUnits.map((u) => (
                  <Segment key={u} $on={unit === u} onClick={() => setUnit(u)}>{u}</Segment>
                ))}
              </Segments>
              <Segments $w={58}>
                {minuteUnits.map((u) => (
                  <Segment key={u} $on={unit === u} onClick={() => setUnit(u)}>{u}</Segment>
                ))}
              </Segments>
              <Segments $w={153} $font={11}>
                {spans.map((s) => (
                  <Segment key={s} $on={span === s} onClick={() => setSpan(s)}>{s}</Segment>
                ))}
              </Segments>
              <Field $w={39}>
                <TextInput aria-label="주기" $pad={8} defaultValue="5" />
                <ArrowCell aria-label="열기"><Down /></ArrowCell>
              </Field>
              <Field $w={30}>
                <TextInput aria-label="봉 개수" $align="right" $pad={1} defaultValue="72" />
              </Field>
              <Total>/4500</Total>
              <ToolButton $w={19} aria-label="지표 추가">
                <Glyph d="M3 1V10 M2 3H4V8H2Z M7 1V8 M6 3H8V6H6Z M11 8V14 M8 11H14" />
              </ToolButton>
              <ToolButton $w={18} aria-label="선 추가">
                <Glyph d="M1 6L4 2L8 6L12 2 M1 3L4 6L8 2L12 6 M11 8V14 M8 11H14" />
              </ToolButton>
              <ToolButton $w={18} aria-label="저장"><Save size={15} color="#555" strokeWidth={2} /></ToolButton>
              <ToolButton $w={19} aria-label="설정"><Settings size={15} color="#666" strokeWidth={3} /></ToolButton>
              <CheckLabel>
                <input type="checkbox" />D
              </CheckLabel>
            </Row>
            <Row>
              <Quote>
                <QuoteCell $w={75} $color={RED}>
                  3,430
                  <UpMark width="11" height="9" fill={RED}><path d="M5 0H6L11 9H0Z" /></UpMark>
                </QuoteCell>
                <QuoteCell $w={49} $color={RED}>40</QuoteCell>
                <QuoteCell $w={48} $color={RED} $end>+1.18%</QuoteCell>
                <QuoteCell $w={72}>3,649,906</QuoteCell>
                <QuoteCell $w={57} $color="#1446c8">40.82%</QuoteCell>
                <QuoteCell $w={42} $end>11.35%</QuoteCell>
                <QuoteCell $w={82} $end>12,732백만</QuoteCell>
                <QuoteCell $w={39}>최우선</QuoteCell>
                <QuoteCell $w={43} $color={RED}>3,430</QuoteCell>
                <QuoteCell $w={57} $color={RED} $pad={7} $end>3,425</QuoteCell>
                <QuoteCell $w={14}>시</QuoteCell>
                <QuoteCell $w={40} $color={RED}>3,500</QuoteCell>
                <QuoteCell $w={21}>고</QuoteCell>
                <QuoteCell $w={40} $color={RED}>3,670</QuoteCell>
                <QuoteCell $w={21}>저</QuoteCell>
                <QuoteCell $w={40} $color="#1446c8">3,355</QuoteCell>
              </Quote>
              <ToolButton $w={40} $bg="#f6cfca">매수</ToolButton>
              <ToolButton $w={40} $bg="#c6def4">매도</ToolButton>
            </Row>
          </Toolbars>

          <ChartFrame>
            <Axis $left>
              <AxisLabels $left $top={124} $right={2}>
                {priceLabels.map((label) => (
                  <AxisLabel key={label} $h={43}>{label}</AxisLabel>
                ))}
              </AxisLabels>
              <PriceTag $left>3,480</PriceTag>
              <PriceChange $left>:,65%</PriceChange>
            </Axis>
            <Plot>
              <PricePlot />
              <PlotCaption><i /><span>모비스 매물대 수(13)</span></PlotCaption>
            </Plot>
            <Axis>
              <Ticks shapeRendering="crispEdges" stroke="#999">
                <path d={tickPath(62, 88.1, 9, 6) + tickPath(27, 17.62, 49, 2)} />
              </Ticks>
              <AxisLabels $top={17}>
                {percentLabels.map((label) => (
                  <AxisLabel key={label} $h={88}>{label}</AxisLabel>
                ))}
              </AxisLabels>
              <HighLow $color={RED}>LC:0,87</HighLow>
              <HighLow $color={BLUE}><br />HC:-5,18</HighLow>
              <PriceTag>3,480</PriceTag>
              <PriceChange>2,65%</PriceChange>
            </Axis>

            <VolumeAxis left />
            <Plot $last><VolumePlot /></Plot>
            <VolumeAxis />

            <span />
            <TimeAxis>
              <TimeCell $grow={226}>09:00</TimeCell>
              <TimeCell $grow={301}>09:01</TimeCell>
              <TimeCell $grow={301}>09:02</TimeCell>
              <TimeCell $grow={301}>09:03</TimeCell>
              <TimeCell $grow={301}>09:04</TimeCell>
              <TimeCell $grow={301}>09:05</TimeCell>
              <TimeCell $grow={87}>09:06</TimeCell>
              <TimeTag>2025/12/22(월) 09:03:40</TimeTag>
            </TimeAxis>
            <TimeEnd>09:06:1</TimeEnd>
          </ChartFrame>

          <BottomBar>
            <RaisedButton aria-label="왼쪽으로">
              <svg width="5" height="8"><path d="M5 0V8L0 4Z" /></svg>
            </RaisedButton>
            <ScrollTrack><ScrollThumb /></ScrollTrack>
            <RaisedButton aria-label="재생">
              <svg width="5" height="8"><path d="M0 0V8L5 4Z" /></svg>
            </RaisedButton>
            <RaisedButton aria-label="뒤로">
              <svg width="9" height="8"><path d="M4 0V8L0 4Z M9 0V8L5 4Z" /></svg>
            </RaisedButton>
            <RaisedButton aria-label="정지">
              <svg width="7" height="7"><path d="M0 0H7V7H0Z" /></svg>
            </RaisedButton>
            <RaisedButton aria-label="앞으로">
              <svg width="9" height="8"><path d="M0 0V8L4 4Z M5 0V8L9 4Z" /></svg>
            </RaisedButton>
            <SpeedBox>
              <Speed type="range" min="0" max="10" defaultValue="0" aria-label="재생 속도" />
              <svg width="70" height="3" shapeRendering="crispEdges" stroke="#000">
                <path d="M1.5 1.5H70" strokeWidth="3" strokeDasharray="1 5.5" />
              </svg>
            </SpeedBox>
            {barIcons.map(([name, d], i) => (
              <BarIcon key={name} aria-label={name} $on={i === 3}><Glyph d={d} /></BarIcon>
            ))}
            <BarIcon aria-label="축소"><Minus size={13} strokeWidth={4} /></BarIcon>
            <BarIcon aria-label="확대"><Plus size={15} strokeWidth={4} /></BarIcon>
            <BarIcon><b>A</b></BarIcon>
          </BottomBar>
        </Body>
      </Window>
    </>
  );
};

export default App;
